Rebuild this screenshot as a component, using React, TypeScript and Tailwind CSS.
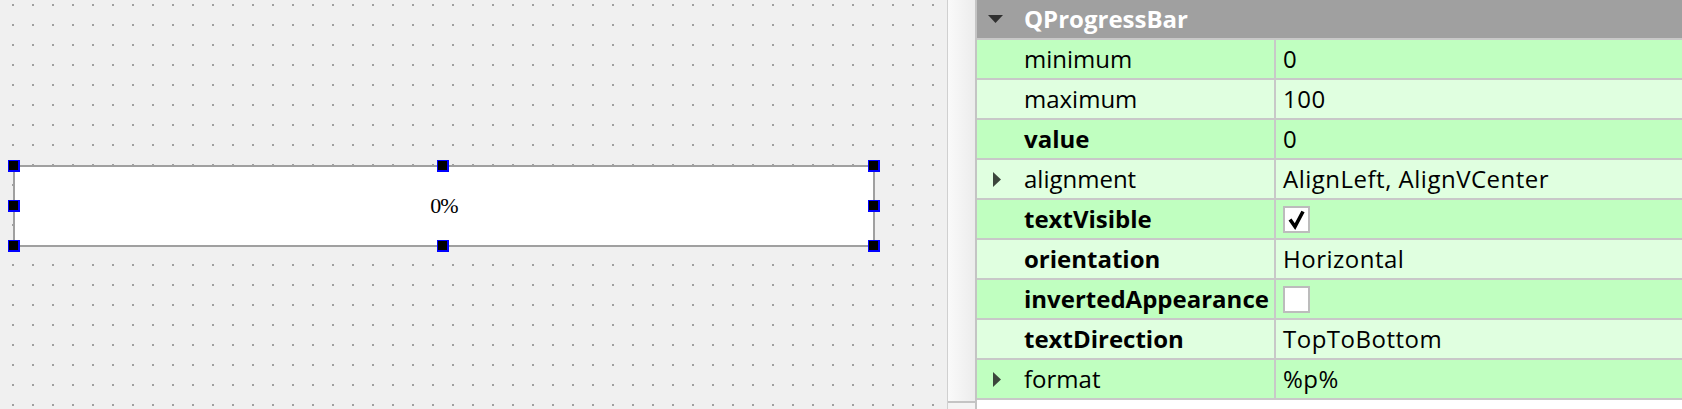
import React from 'react';

type Prop = {
  name: string;
  value?: string;
  bold?: boolean;
  expandable?: boolean;
  check?: boolean;
};

const props: Prop[] = [
  { name: 'minimum', value: '0' },
  { name: 'maximum', value: '100' },
  { name: 'value', value: '0', bold: true },
  { name: 'alignment', value: 'AlignLeft, AlignVCenter', expandable: true },
  { name: 'textVisible', bold: true, check: true },
  { name: 'orientation', value: 'Horizontal', bold: true },
  { name: 'invertedAppearance', bold: true, check: false },
  { name: 'textDirection', value: 'TopToBottom', bold: true },
  { name: 'format', value: '%p%', expandable: true },
];

function Handle({ className }: { className: string }) {
  return (
    <div className={`absolute w-[12px] h-[12px] bg-[#0000ff] ${className}`}>
      <div className="ml-[1px] mt-[1px] w-[9px] h-[9px] bg-black" />
    </div>
  );
}

function CheckBox({ checked }: { checked: boolean }) {
  return (
    <div className="w-[27px] h-[27px] border-2 border-[#bcbcbc] bg-white">
      {checked && (
        <svg width="23" height="23" viewBox="0 0 23 23">
          <path d="M5 11.5 L10 18.5 L18 3.5" fill="none" stroke="#000" strokeWidth="3.6" strokeLinejoin="miter" />
        </svg>
      )}
    </div>
  );
}

function Canvas() {
  return (
    <div className="relative w-[947px] h-full shrink-0">
      <svg className="absolute inset-0" width="947" height="409">
        <defs>
          <pattern id="grid" x="0" y="0" width="20" height="20" patternUnits="userSpaceOnUse">
            <rect x="12" y="4" width="2" height="2" fill="#a0a0a0" />
          </pattern>
        </defs>
        <rect width="947" height="409" fill="url(#grid)" />
      </svg>
      <div className="relative pt-[165px] pl-[13px]">
        <div className="relative w-[862px] h-[82px] border-2 border-[#a0a0a0] bg-white flex items-center justify-center">
          <span className="text-[22px] tracking-[-1px] text-black leading-none font-['Liberation_Serif',serif]">0%</span>
          <Handle className="-left-[7px] -top-[7px]" />
          <Handle className="left-[422px] -top-[7px]" />
          <Handle className="-right-[7px] -top-[7px]" />
          <Handle className="-left-[7px] top-[33px]" />
          <Handle className="-right-[7px] top-[33px]" />
          <Handle className="-left-[7px] -bottom-[7px]" />
          <Handle className="left-[422px] -bottom-[7px]" />
          <Handle className="-right-[7px] -bottom-[7px]" />
        </div>
      </div>
    </div>
  );
}

export default function App() {
  return (
    <div className="flex w-[1682px] h-[409px] overflow-hidden bg-[#f0f0f0] font-['Open_Sans',sans-serif]">
      <Canvas />
      <div className="w-[30px] h-full shrink-0 border-l border-[#d0d0d0] border-r-2 border-r-[#c4c4c4] bg-gradient-to-r from-[#fafafa] to-[#ececec] flex flex-col">
        <div className="h-[401px]" />
        <div className="border-t-2 border-[#c4c4c4] flex-1 bg-[#f4f4f4]" />
      </div>
      <div className="flex-1 h-full bg-white flex flex-col">
        <div className="h-[40px] bg-[#a0a0a0] border-b-2 border-[#c8c8c8] flex items-center">
          <div className="w-[47px] pl-[11px] flex items-center">
            <svg width="15" height="8" viewBox="0 0 15 8">
              <path d="M0 0 H15 L7.5 8 Z" fill="#303030" />
            </svg>
          </div>
          <span className="text-white font-bold text-[24px] leading-none">QProgressBar</span>
        </div>
        {props.map((p, i) => (
          <div
            key={p.name}
            className={`h-[40px] border-b-2 border-[#c8c8c8] flex ${i % 2 === 0 ? 'bg-[#c0ffc0]' : 'bg-[#e0ffe0]'}`}
          >
            <div className="w-[299px] border-r-2 border-[#c8c8c8] flex items-center">
              <div className="w-[47px] pl-[16px] flex items-center">
                {p.expandable && (
                  <svg width="8" height="15" viewBox="0 0 8 15">
                    <path d="M0 0 L8 7.5 L0 15 Z" fill="#3c463c" />
                  </svg>
                )}
              </div>
              <span className={`text-[24px] leading-none text-black ${p.bold ? 'font-bold' : ''}`}>{p.name}</span>
            </div>
            <div className="flex-1 pl-[7px] flex items-center">
              {p.check !== undefined ? (
                <CheckBox checked={p.check} />
              ) : (
                <span className="text-[24px] leading-none tracking-[0.5px] text-black">{p.value}</span>
              )}
            </div>
          </div>
        ))}
      </div>
    </div>
  );
}
